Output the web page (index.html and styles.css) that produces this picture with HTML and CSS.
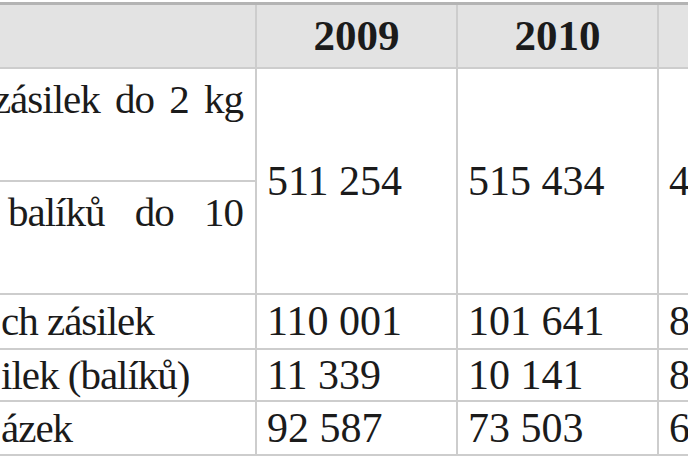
FILE: index.html
```html
<!DOCTYPE html>
<html lang="cs">
<head>
<meta charset="utf-8">
<title>Tabulka zásilek</title>
<link rel="stylesheet" href="styles.css">
</head>
<body>
<table class="data">
  <colgroup>
    <col class="c-label">
    <col class="c-val">
    <col class="c-val">
    <col class="c-val">
  </colgroup>
  <thead>
    <tr class="r-head">
      <th></th>
      <th>2009</th>
      <th>2010</th>
      <th></th>
    </tr>
  </thead>
  <tbody>
    <tr class="r-tall">
      <td class="label top"><div class="clip end just1"><span>zásilek do 2 kg</span></div></td>
      <td class="val" rowspan="2">511 254</td>
      <td class="val" rowspan="2">515 434</td>
      <td class="val" rowspan="2">4</td>
    </tr>
    <tr class="r-tall2">
      <td class="label top"><div class="clip end just2"><span>balíků do 10</span></div></td>
    </tr>
    <tr class="r-a">
      <td class="label"><div class="clip"><span>ch zásilek</span></div></td>
      <td class="val">110 001</td>
      <td class="val">101 641</td>
      <td class="val">8</td>
    </tr>
    <tr class="r-b">
      <td class="label"><div class="clip"><span>ilek (balíků)</span></div></td>
      <td class="val">11 339</td>
      <td class="val">10 141</td>
      <td class="val">8</td>
    </tr>
    <tr class="r-c">
      <td class="label"><div class="clip"><span>ázek</span></div></td>
      <td class="val">92 587</td>
      <td class="val">73 503</td>
      <td class="val">6</td>
    </tr>
  </tbody>
</table>
</body>
</html>
```

FILE: styles.css
```css
html, body {
  margin: 0;
  padding: 0;
  background: #ffffff;
  overflow: hidden;
  font-family: "Liberation Serif", "DejaVu Serif", serif;
}

body {
  width: 688px;
  height: 459px;
}

.data {
  border-collapse: collapse;
  table-layout: fixed;
  width: 858px;
  margin-top: 2px;
  font-family: "Liberation Serif", "DejaVu Serif", serif;
  color: #1b1b1b;
  border-top: 3px solid #b4b4b4;
}

.c-label { width: 256px; }
.c-val { width: 201px; }

.data th,
.data td {
  font-family: "Liberation Serif", "DejaVu Serif", serif;
  border: 2px solid #cdcdcd;
  padding: 0;
}

.data th:first-child,
.data td.label {
  border-left: none;
}

.data thead th {
  background: #e3e3e3;
  font-weight: bold;
  font-size: 43px;
  text-align: center;
  vertical-align: middle;
  border-top: none;
}

.r-head { height: 64px; }
.r-tall { height: 113px; }
.r-tall2 { height: 113px; }
.r-a { height: 55px; }
.r-b { height: 52px; }
.r-c { height: 54px; }

.val {
  font-size: 42px;
  padding-left: 10px !important;
  vertical-align: middle;
  white-space: nowrap;
  overflow: hidden;
}

.label {
  font-size: 41px;
  letter-spacing: -1px;
  vertical-align: middle;
}

.label.top {
  vertical-align: top;
  padding-top: 6px;
}

.clip {
  display: flex;
  overflow: hidden;
  white-space: nowrap;
  padding-left: 1px;
}

.clip.end {
  justify-content: flex-end;
  padding-right: 12px;
}

.clip.just1 span {
  word-spacing: 6px;
}

.clip.just2 span {
  word-spacing: 21px;
}
```
